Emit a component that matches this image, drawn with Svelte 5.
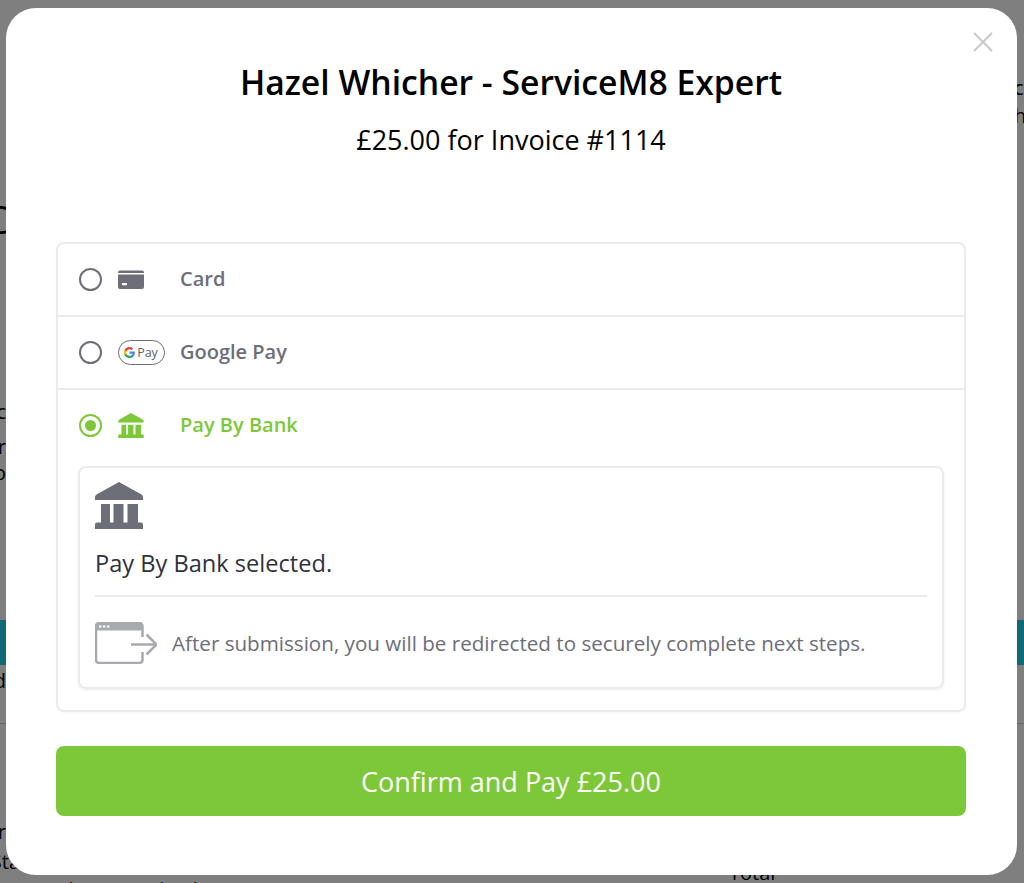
<script>
  const leftScraps = [
    { text: 'C', cls: 'big', top: 197 },
    { text: 'c', cls: '', top: 160 },
    { text: 'r', cls: '', top: 13 },
    { text: 'o', cls: '', top: 4 }
  ];

  let method = $state('bank');

  const methods = [
    { id: 'card', label: 'Card' },
    { id: 'gpay', label: 'Google Pay' },
    { id: 'bank', label: 'Pay By Bank' }
  ];

  const bankPath = 'M24 0 46.500 12.500q1.500 1 1.500 3V18H0v-2.500q0-2 1.500-3zM6 22h9v18.500H6zM18.500 22h10v18.500h-10zM32.500 22H43v18.500H32.500zM2 40.500h44q2 0 2 2V47H0v-4.500q0-2 2-2z';
</script>

<div class="page">
  <div class="gutter left">
    {#each leftScraps as s}
      <div class={'scrap ' + s.cls} style:margin-top={s.top + 'px'}>{s.text}</div>
    {/each}
    <div class="teal"></div>
    <div class="scrap after-teal">d</div>
    <div class="rule"></div>
    <div class="scrap low">r</div>
    <div class="scrap sta">Sta</div>
  </div>
  <div class="mid">
    <div class="under-left">Number: Digital Ltd</div>
    <div class="under-right">Total</div>
  </div>
  <div class="gutter right">
    <div class="scrap r1">c</div>
    <div class="scrap r2">he</div>
    <div class="teal r-teal"></div>
    <div class="rule r-rule"></div>
  </div>
</div>

<div class="overlay">
  <div class="modal">
    <button class="close" aria-label="Close">
      <svg width="20" height="20" viewBox="0 0 20 20"><path d="M1 1l18 18M19 1L1 19" stroke="#c9c9c9" stroke-width="2" fill="none"/></svg>
    </button>
    <h1>Hazel Whicher - ServiceM8 Expert</h1>
    <p class="sub">£25.00 for Invoice #1114</p>

    <div class="accordion">
      {#each methods as m}
        <div class="item" class:active={method === m.id}>
          <button class="head" onclick={() => (method = m.id)}>
            <span class="radio"></span>
            <span class="icon">
              {#if m.id === 'card'}
                <svg width="26" height="19" viewBox="0 0 26 19"><path fill="#6d6e78" d="M0 2.500a2 2 0 0 1 2-2h22a2 2 0 0 1 2 2V3H0zM0 4.500h26V17a2 2 0 0 1-2 2H2a2 2 0 0 1-2-2zM4 13v2.200h5V13z" fill-rule="evenodd"/></svg>
              {:else if m.id === 'gpay'}
                <span class="gpay">
                  <svg width="11" height="11" viewBox="0 0 24 24">
                    <path fill="#4285f4" d="M23.500 12.300c0-.8-.1-1.600-.2-2.300H12v4.500h6.500a5.500 5.500 0 0 1-2.400 3.600v3h3.900c2.200-2.100 3.500-5.200 3.500-8.800z"/>
                    <path fill="#34a853" d="M12 24c3.200 0 6-1.100 8-2.900l-3.900-3c-1.100.7-2.500 1.200-4.100 1.200-3.100 0-5.800-2.100-6.700-5H1.300v3.100A12 12 0 0 0 12 24z"/>
                    <path fill="#fbbc04" d="M5.300 14.300a7.200 7.200 0 0 1 0-4.600V6.600h-4a12 12 0 0 0 0 10.800z"/>
                    <path fill="#ea4335" d="M12 4.800c1.800 0 3.300.6 4.600 1.800l3.400-3.400A11.800 11.800 0 0 0 12 0 12 12 0 0 0 1.300 6.600l4 3.100c.9-2.800 3.600-4.900 6.700-4.900z"/>
                  </svg>
                  <span class="gpay-text">Pay</span>
                </span>
              {:else}
                <svg width="26" height="25" viewBox="0 0 48 47"><path fill="currentColor" d={bankPath}/></svg>
              {/if}
            </span>
            <span class="label">{m.label}</span>
          </button>
          {#if m.id === 'bank' && method === 'bank'}
            <div class="panel">
              <svg class="bank" width="48" height="47" viewBox="0 0 48 47"><path fill="#6d6e78" d={bankPath}/></svg>
              <div class="selected">Pay By Bank selected.</div>
              <div class="note">
                <svg width="62" height="42" viewBox="0 0 62 42" fill="none" stroke="#a9aaae" stroke-width="2.500">
                  <path d="M47.500 15V4a3 3 0 0 0-3-3H4a3 3 0 0 0-3 3v34a3 3 0 0 0 3 3h40.500a3 3 0 0 0 3-3v-8"/>
                  <path d="M1 5h46" stroke-width="7"/>
                  <path d="M36 22.500h25M51.500 12.500l10 10-10 10"/>
                  <path d="M4 4.500h2.500M8 4.500h2.500M12 4.500h2.500" stroke="#fff" stroke-width="2"/>
                </svg>
                <span>After submission, you will be redirected to securely complete next steps.</span>
              </div>
            </div>
          {/if}
        </div>
      {/each}
    </div>

    <button class="pay">Confirm and Pay £25.00</button>
  </div>
</div>

<style>
  :global(body) {
    background: #fff;
    font-family: "Open Sans", "Noto Sans", sans-serif;
  }

  .page {
    height: 883px;
    display: flex;
    overflow: hidden;
    color: #000;
  }

  .gutter {
    width: 6px;
    flex: none;
    display: flex;
    flex-direction: column;
    font-size: 20px;
    line-height: 22px;
  }

  .gutter.left {
    align-items: flex-end;
  }

  .gutter.right {
    width: 7px;
    align-items: flex-start;
  }

  .scrap {
    white-space: nowrap;
    height: 22px;
  }

  .big {
    font-size: 38px;
    line-height: 44px;
    height: 44px;
    margin-right: -3px;
  }

  .teal {
    width: 100%;
    height: 45px;
    background: #20d2ee;
    margin-top: 136px;
    flex: none;
  }

  .after-teal {
    margin-top: 5px;
  }

  .rule {
    width: 100%;
    height: 1px;
    background: #ccc;
    margin-top: 31px;
    flex: none;
  }

  .low {
    margin-top: 97px;
  }

  .sta {
    margin-right: -14px;
    margin-top: 8px;
  }

  .r1 {
    margin-top: 77px;
    margin-left: -3px;
  }

  .r2 {
    margin-top: 6px;
    margin-left: -3px;
  }

  .r-teal {
    margin-top: 493px;
  }

  .r-rule {
    margin-top: 58px;
  }

  .mid {
    flex: 1;
    display: flex;
    font-size: 19px;
    line-height: 22px;
    white-space: nowrap;
  }

  .under-left {
    width: 704px;
    margin: 878px 0 0 19px;
  }

  .under-right {
    margin-top: 862px;
    font-size: 20px;
  }

  .overlay {
    position: fixed;
    inset: 0;
    background: rgba(0, 0, 0, 0.5);
  }

  .modal {
    position: relative;
    box-sizing: border-box;
    width: 1011px;
    height: 867px;
    margin: 8px 0 0 6px;
    padding: 55px 51px 0 50px;
    background: #fff;
    border-radius: 30px;
    display: flex;
    flex-direction: column;
  }

  .close {
    position: absolute;
    top: 24px;
    right: 24px;
    width: 20px;
    height: 20px;
    padding: 0;
    border: 0;
    background: none;
    line-height: 0;
  }

  h1 {
    margin: 0;
    font-size: 33.700px;
    line-height: 38px;
    font-weight: 600;
    color: #000;
    text-align: center;
  }

  .sub {
    margin: 21px 0 0;
    font-size: 27px;
    line-height: 36px;
    color: #000;
    text-align: center;
  }

  .accordion {
    margin-top: 84px;
    border: 2px solid #ebebeb;
    border-radius: 8px;
    box-shadow: 0 1px 3px rgba(0, 0, 0, 0.03);
  }

  .item + .item {
    border-top: 2px solid #ebebeb;
  }

  .head {
    display: flex;
    align-items: center;
    width: 100%;
    height: 71px;
    padding: 0 0 0 21px;
    border: 0;
    background: none;
    font: inherit;
    font-size: 20px;
    font-weight: 600;
    color: #6d6e78;
    text-align: left;
  }

  .label {
    margin-top: -2px;
  }

  .active .head {
    color: #7dc838;
  }

  .radio {
    box-sizing: border-box;
    width: 23px;
    height: 23px;
    border: 2.500px solid #6d6e78;
    border-radius: 50%;
    flex: none;
    position: relative;
  }

  .active .radio {
    border-color: #7dc838;
  }

  .active .radio::after {
    content: '';
    position: absolute;
    inset: 4px;
    background: #7dc838;
    border-radius: 50%;
  }

  .icon {
    width: 62.500px;
    margin-left: 15.500px;
    display: flex;
    align-items: center;
    flex: none;
    line-height: 0;
  }

  .gpay {
    box-sizing: border-box;
    display: flex;
    align-items: center;
    justify-content: center;
    gap: 2px;
    width: 47px;
    height: 25px;
    border: 1.500px solid #6d6e78;
    border-radius: 13px;
  }

  .gpay-text {
    font-size: 12.500px;
    line-height: 14px;
    font-weight: 500;
    color: #5f6368;
  }

  .panel {
    margin: 5px 20px 21px;
    padding: 14px 15px 0;
    height: 223px;
    box-sizing: border-box;
    border: 2px solid #ebebeb;
    border-radius: 8px;
    box-shadow: 0 1px 3px rgba(0, 0, 0, 0.08);
  }

  .bank {
    display: block;
  }

  .selected {
    margin-top: 19px;
    padding-bottom: 17px;
    border-bottom: 2px solid #ebebeb;
    font-size: 23.600px;
    line-height: 30px;
    color: #30313d;
  }

  .note {
    display: flex;
    align-items: center;
    gap: 15px;
    margin-top: 25px;
    font-size: 20.620px;
    color: #6d6e78;
  }

  .pay {
    margin-top: 34px;
    height: 70px;
    border: 0;
    border-radius: 8px;
    background: #7dc838;
    color: #fff;
    font: inherit;
    font-size: 27px;
  }
</style>
